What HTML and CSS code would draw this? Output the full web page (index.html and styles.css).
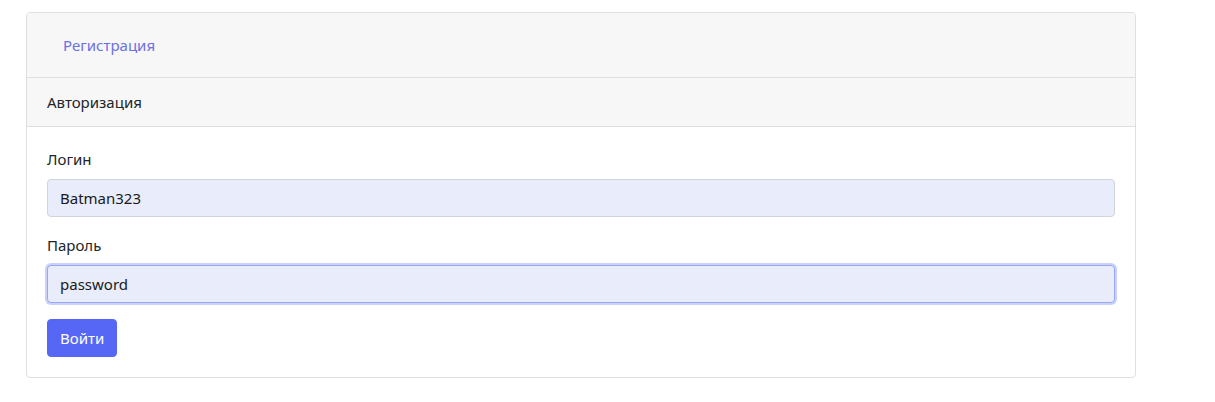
FILE: index.html
```html
<!DOCTYPE html>
<html lang="ru">
<head>
<meta charset="utf-8">
<link rel="stylesheet" href="styles.css">
</head>
<body>
<div class="card">
  <div class="card-top">
    <a class="reg-link" href="#">Регистрация</a>
  </div>
  <div class="card-header">Авторизация</div>
  <div class="card-body">
    <div class="form-group">
      <label class="label">Логин</label>
      <input class="input" type="text" value="Batman323">
    </div>
    <div class="form-group">
      <label class="label">Пароль</label>
      <input class="input focused" type="text" value="password">
    </div>
    <button class="btn">Войти</button>
  </div>
</div>
</body>
</html>
```
FILE: styles.css
```css
* { box-sizing: border-box; }
html, body { margin: 0; padding: 0; background: #fff; }
body {
  font-family: "Noto Sans", "Open Sans", sans-serif;
  font-size: 15px;
  line-height: 24px;
  color: #212529;
  padding: 12px 79px 0 26px;
}
.card {
  border: 1px solid #dfdfdf;
  border-radius: 4px;
  width: 1110px;
  overflow: hidden;
}
.card-top {
  background: #f7f7f7;
  height: 65px;
  border-bottom: 1px solid #dfdfdf;
  display: flex;
  align-items: center;
  padding-left: 36px;
}
.reg-link {
  color: #6b70e2;
  text-decoration: none;
}
.card-header {
  background: #f7f7f7;
  height: 49px;
  border-bottom: 1px solid #dfdfdf;
  padding: 12px 20px;
}
.card-body {
  padding: 20px;
}
.form-group { margin-bottom: 16px; }
.label {
  display: block;
  margin-bottom: 8px;
}
.input {
  display: block;
  width: 100%;
  height: 38px;
  padding: 6px 12px;
  font: inherit;
  color: #1a1a1a;
  background: #e8ecfb;
  border: 1px solid #ced4da;
  border-radius: 4px;
  outline: none;
}
.input.focused {
  border-color: #9aa6f5;
  box-shadow: 0 0 0 2px #c9d2fb;
}
.btn {
  display: block;
  height: 38px;
  padding: 6px 12px;
  font: inherit;
  color: #fff;
  background: #5667f5;
  border: 1px solid #5667f5;
  border-radius: 4px;
}
```
